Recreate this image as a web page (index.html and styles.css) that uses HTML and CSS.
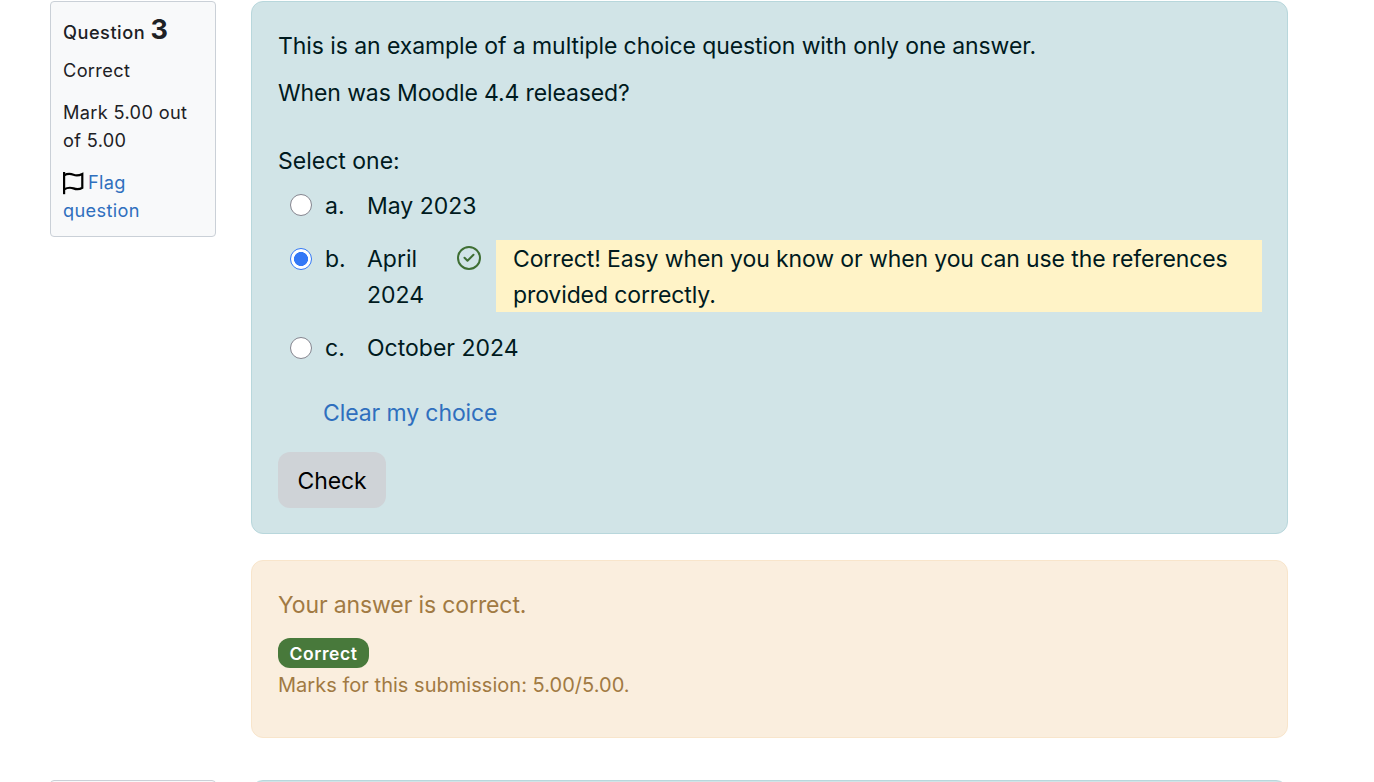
FILE: index.html
```
<!DOCTYPE html>
<html lang="en">
  <head>
    <meta charset="UTF-8" />
    <meta name="viewport" content="width=device-width, initial-scale=1.0" />
    <title>Quiz</title>
    <link rel="stylesheet" href="styles.css">
  </head>
  <body>
    <!-- Question 3 -->
    <div class="question">
      <div class="info">
        <h3 class="number">Question <span class="qno">3</span></h3>
        <div class="state">Correct</div>
        <div class="grade">Mark 5.00 out<br />of 5.00</div>
        <div class="flag">
          <svg class="flag-icon" viewBox="0 0 22 24" fill="none" stroke="#000" stroke-width="2.200">
            <path d="M1.100 1V23.200" />
            <path d="M1.200 4.200C5 2.200 7.500 2.600 10.500 3.700C13.500 4.800 16 4.500 19.300 2.900V16.800C16.500 18.500 13.500 18.500 10.500 17.400C7.500 16.300 4.500 16.500 1.200 18.300" />
          </svg><a href="#">Flag</a><br /><a href="#">question</a>
        </div>
      </div>

      <div class="content">
        <div class="formulation">
          <p class="qtext intro">This is an example of a multiple choice question with only one answer.</p>
          <p class="qtext">When was Moodle 4.4 released?</p>
          <div class="prompt">Select one:</div>
          <div class="answers">
            <div class="answer">
              <input type="radio" name="q3" id="q3a" class="choice" />
              <label for="q3a" class="letter">a.</label>
              <div class="text">May 2023</div>
            </div>
            <div class="answer">
              <input type="radio" name="q3" id="q3b" class="choice" checked />
              <label for="q3b" class="letter">b.</label>
              <div class="text narrow">April 2024</div>
              <svg class="tick" viewBox="0 0 24 24" fill="none" stroke="#3f6f34" stroke-width="2" stroke-linecap="round" stroke-linejoin="round">
                <circle cx="12" cy="12" r="11" />
                <path d="M7.500 11.800L10.500 14.800L16.500 8.800" />
              </svg>
              <div class="specific">Correct! Easy when you know or when you can use the references<br />provided correctly.</div>
            </div>
            <div class="answer">
              <input type="radio" name="q3" id="q3c" class="choice" />
              <label for="q3c" class="letter">c.</label>
              <div class="text">October 2024</div>
            </div>
          </div>
          <a href="#" class="clear">Clear my choice</a>
          <button class="check">Check</button>
        </div>

        <div class="outcome">
          <p class="feedback">Your answer is correct.</p>
          <span class="badge">Correct</span>
          <div class="grading">Marks for this submission: 5.00/5.00.</div>
        </div>
      </div>
    </div>

    <!-- Next question -->
    <div class="question next">
      <div class="info"></div>
      <div class="content">
        <div class="formulation"></div>
      </div>
    </div>
  </body>
</html>
```

FILE: styles.css
```
* {
  box-sizing: border-box;
}

body {
  display: flex;
  flex-direction: column;
  gap: 42px;
  margin: 0;
  padding: 1px 86px 0 50px;
  height: 782px;
  overflow: hidden;
  background-color: #fff;
  font-family: Inter, "Liberation Sans", sans-serif;
  font-size: 23px;
  line-height: 36px;
  color: #001a1e;
}

p,
h3 {
  margin: 0;
}

a {
  color: #2f6fbe;
  text-decoration: none;
}

.question {
  display: flex;
  flex: none;
  align-items: flex-start;
  gap: 35px;
}

/* Only the top edge of the next question is in view */
.next {
  height: 2px;
  overflow: hidden;
}

/* Info box on the left */
.info {
  width: 166px;
  min-height: 236px;
  padding: 12px;
  background-color: #f8f9fa;
  border: 1px solid #cad0d7;
  border-radius: 4px;
  font-size: 18.2px;
  line-height: 28px;
  letter-spacing: 0.34px;
  color: #1d2125;
  white-space: nowrap;
}

.number {
  height: 32px;
  font-size: 18.2px;
  font-weight: 500;
  line-height: 32px;
  letter-spacing: 0.5px;
}

.qno {
  font-size: 27px;
  font-weight: 700;
}

.state {
  margin-top: 10px;
}

.grade,
.flag {
  margin-top: 14px;
}

.flag {
  height: 56px;
}

.flag-icon {
  width: 22px;
  height: 24px;
  margin-right: 3px;
  vertical-align: -6px;
}

/* Question body */
.content {
  flex: 1;
}

.formulation {
  min-height: 533px;
  padding: 26px 25px 25px 26px;
  background-color: #d1e4e7;
  border: 1px solid #b8d7dc;
  border-radius: 12px;
}

.qtext {
  letter-spacing: -0.12px;
}

.intro {
  margin-bottom: 11px;
  letter-spacing: -0.08px;
}

.prompt {
  margin-top: 32px;
}

.answers {
  display: flex;
  flex-direction: column;
  gap: 17px;
  margin-top: 9px;
  padding-left: 12px;
}

.answer {
  display: flex;
  align-items: flex-start;
}

.choice {
  appearance: none;
  width: 22px;
  height: 22px;
  margin: 6px 13px 0 0;
  background-color: #fff;
  border: 1px solid #85858f;
  border-radius: 50%;
}

.answer + .answer .choice {
  margin-top: 7px;
}

.choice:checked {
  background: radial-gradient(circle, #3478f6 6.7px, #fff 7.3px);
  border-color: #3478f6;
}

.letter {
  width: 42px;
}

.narrow {
  width: 90px;
}

.tick {
  flex: none;
  width: 24px;
  height: 24px;
  margin: 5px 15px 0 0;
}

.specific {
  flex: 1;
  height: 72px;
  margin-top: -1px;
  padding: 1px 0 0 17px;
  background-color: #fff3c7;
  letter-spacing: -0.11px;
  white-space: nowrap;
}

.clear {
  display: block;
  margin: 29px 0 21px 45px;
  letter-spacing: -0.1px;
}

.check {
  display: block;
  width: 108px;
  height: 56px;
  padding: 2px 0 0;
  background-color: #cfd3d7;
  border: none;
  border-radius: 12px;
  font: inherit;
  letter-spacing: -0.1px;
  color: #000;
}

/* Feedback box */
.outcome {
  height: 178px;
  margin-top: 26px;
  padding: 26px;
  background-color: #faeede;
  border: 1px solid #f8e5cb;
  border-radius: 12px;
  color: #a17a43;
}

.feedback {
  letter-spacing: -0.12px;
}

.badge {
  display: block;
  width: 91px;
  height: 30px;
  margin: 15px 0 3px;
  background-color: #48793b;
  border-radius: 12px;
  color: #fff;
  font-size: 17.5px;
  font-weight: 600;
  line-height: 31px;
  letter-spacing: 0.55px;
  text-align: center;
}

.grading {
  font-size: 20px;
  line-height: 28px;
  letter-spacing: 0.03px;
}
```
